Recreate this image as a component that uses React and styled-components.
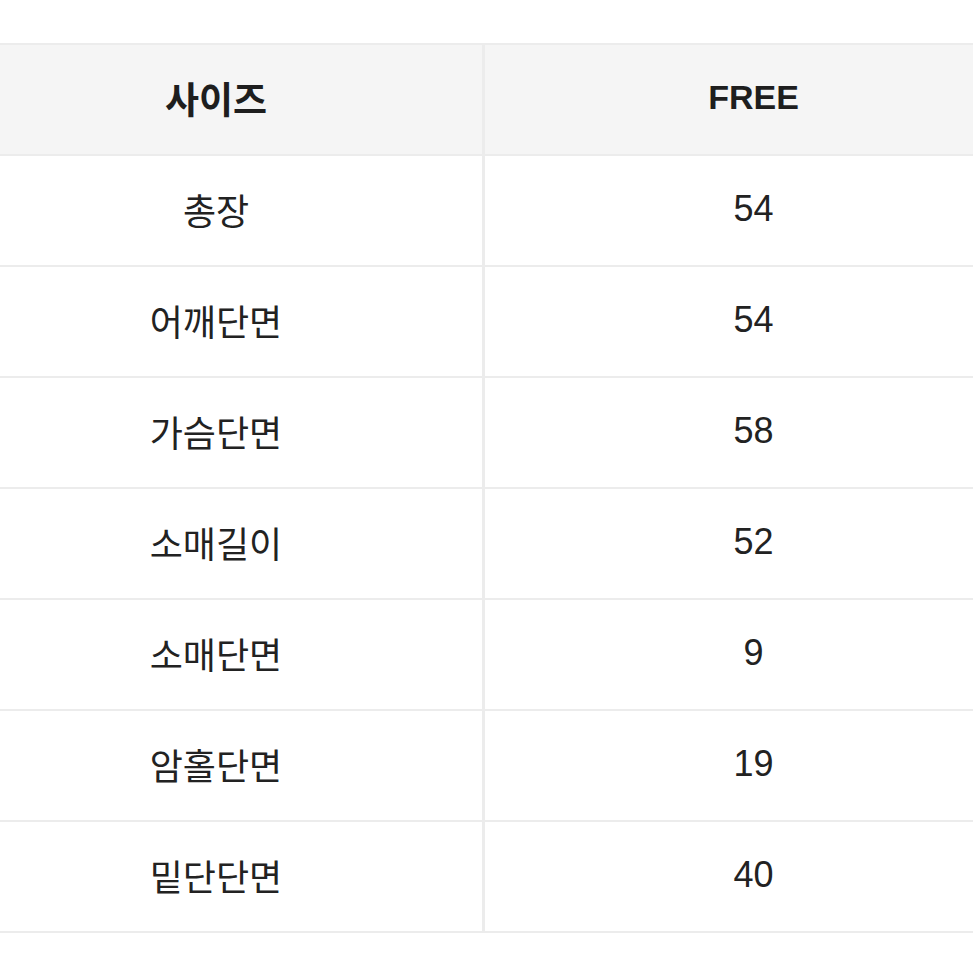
import React from "react";
import styled, { createGlobalStyle } from "styled-components";

const Global = createGlobalStyle`
  html, body { margin: 0; padding: 0; background: #fff; }
  body { overflow: hidden; font-family: "Liberation Sans", "Noto Sans CJK KR", sans-serif; }
`;

const Page = styled.div`
  padding-top: 43px;
  width: 973px;
  height: 973px;
  overflow: hidden;
  box-sizing: border-box;
`;

const Table = styled.div`
  margin-left: -50px;
  width: 1072px;
  border-top: 2px solid #ececec;
`;

const Row = styled.div`
  display: grid;
  grid-template-columns: 535px 537px;
  height: 111px;
  box-sizing: border-box;
  border-bottom: 2px solid #ececec;
  background: ${(p) => (p.$head ? "#f5f5f5" : "#fff")};
`;

const Cell = styled.div`
  display: flex;
  align-items: center;
  justify-content: center;
  font-size: ${(p) => p.$size || 36}px;
  color: ${(p) => (p.$head ? "#1e1e1e" : "#222")};
  font-weight: ${(p) => (p.$head ? 700 : 400)};
  border-right: ${(p) => (p.$first ? "3px solid #ececec" : "none")};
  padding-bottom: 4px;
  box-sizing: border-box;
`;

const rows = [
  ["총장", "54"],
  ["어깨단면", "54"],
  ["가슴단면", "58"],
  ["소매길이", "52"],
  ["소매단면", "9"],
  ["암홀단면", "19"],
  ["밑단단면", "40"],
];

export default function App() {
  return (
    <>
      <Global />
      <Page>
        <Table>
          <Row $head>
            <Cell $head $first $size={37}>사이즈</Cell>
            <Cell $head $size={34}>FREE</Cell>
          </Row>
          {rows.map(([k, v]) => (
            <Row key={k}>
              <Cell $first>{k}</Cell>
              <Cell>{v}</Cell>
            </Row>
          ))}
        </Table>
      </Page>
    </>
  );
}
